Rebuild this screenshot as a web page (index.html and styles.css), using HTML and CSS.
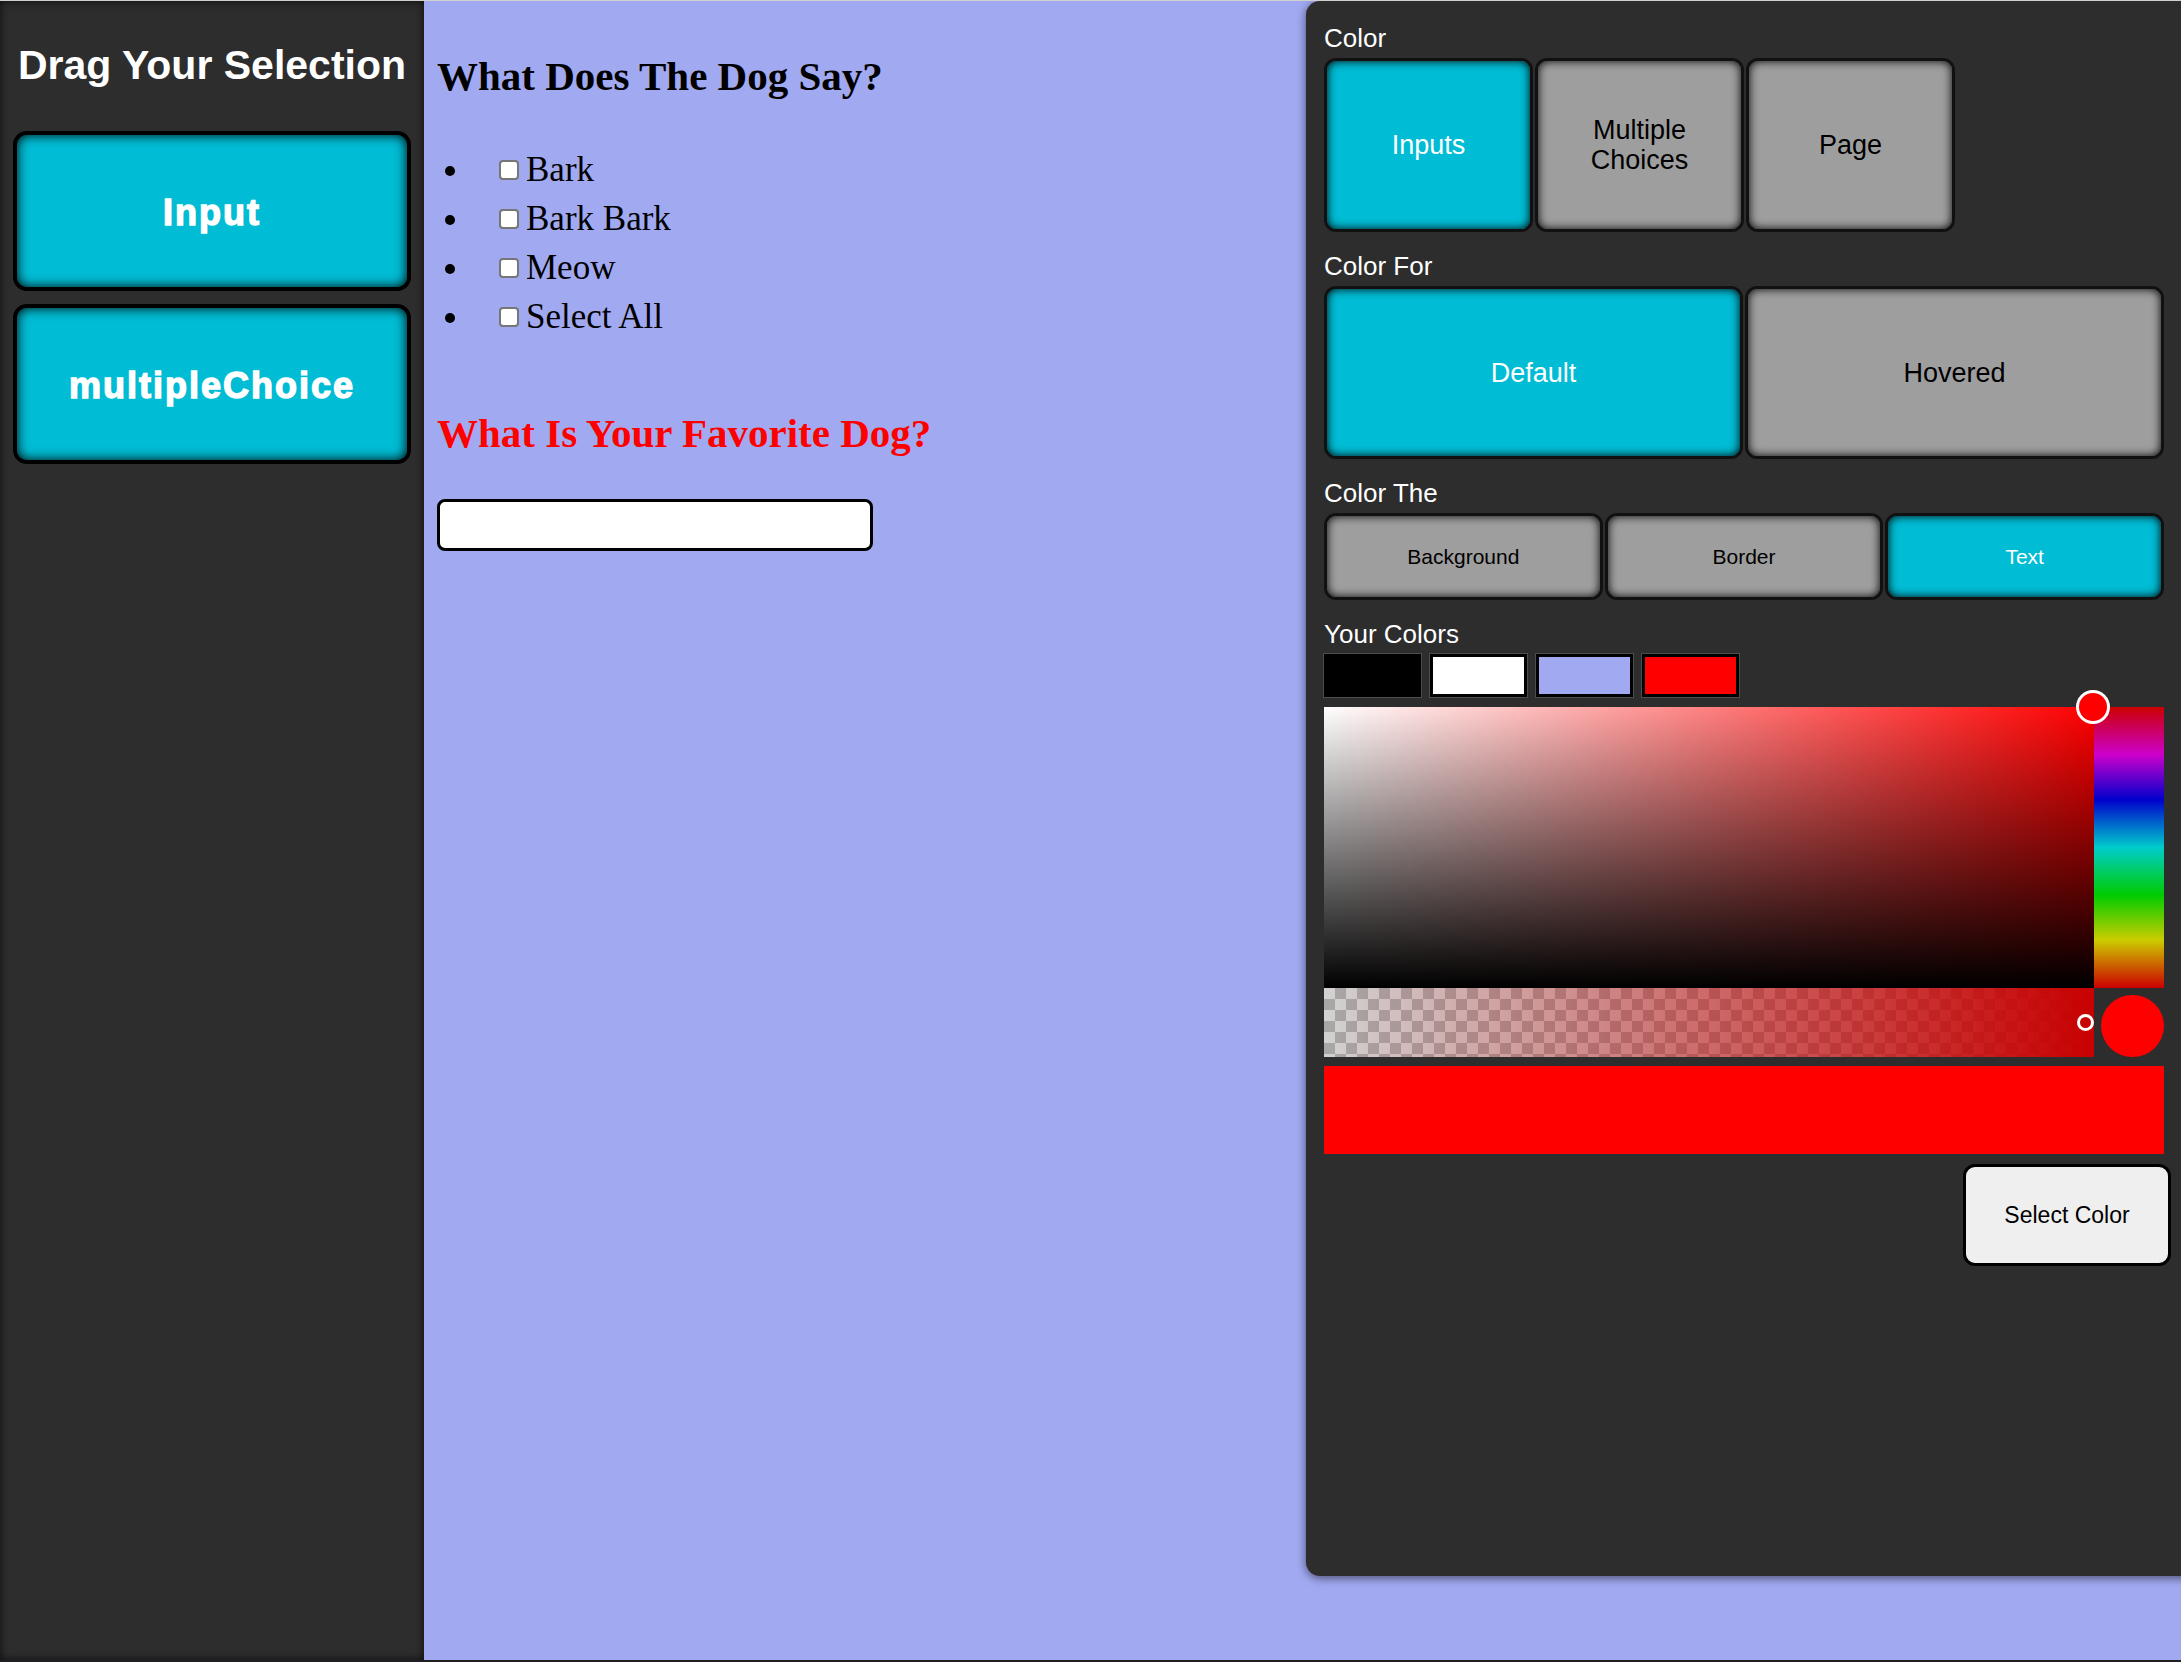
FILE: index.html
```html
<!DOCTYPE html>
<html>
<head>
<meta charset="utf-8">
<title>Form Builder</title>
<link rel="stylesheet" href="styles.css">
</head>
<body>
<div class="app">
  <aside class="sidebar">
    <h1 class="side-title">Drag Your Selection</h1>
    <div class="drag-btn">Input</div>
    <div class="drag-btn">multipleChoice</div>
  </aside>

  <main class="canvas">
    <h2 class="q-title">What Does The Dog Say?</h2>
    <ul class="choices">
      <li><input type="checkbox">Bark</li>
      <li><input type="checkbox">Bark Bark</li>
      <li><input type="checkbox">Meow</li>
      <li><input type="checkbox">Select All</li>
    </ul>
    <h2 class="q-title red">What Is Your Favorite Dog?</h2>
    <input class="text-input" type="text">
  </main>

  <section class="panel">
    <div class="panel-inner">
      <div class="label">Color</div>
      <div class="row row-a">
        <div class="opt on">Inputs</div>
        <div class="opt">Multiple<br>Choices</div>
        <div class="opt">Page</div>
      </div>

      <div class="label">Color For</div>
      <div class="row row-b">
        <div class="opt on">Default</div>
        <div class="opt">Hovered</div>
      </div>

      <div class="label">Color The</div>
      <div class="row row-c">
        <div class="opt">Background</div>
        <div class="opt">Border</div>
        <div class="opt on">Text</div>
      </div>

      <div class="label">Your Colors</div>
      <div class="swatches">
        <div class="swatch sw-black"></div>
        <div class="swatch sw-white"></div>
        <div class="swatch sw-lav"></div>
        <div class="swatch sw-red"></div>
      </div>

      <div class="picker">
        <div class="pick-top">
          <div class="sat"></div>
          <div class="hue"></div>
        </div>
        <div class="pick-alpha">
          <div class="alpha"></div>
          <div class="preview"></div>
        </div>
        <div class="sat-thumb"></div>
        <div class="alpha-thumb"></div>
      </div>

      <div class="result"></div>

      <div class="actions">
        <button class="select-btn">Select Color</button>
      </div>
    </div>
  </section>
</div>
</body>
</html>
```

FILE: styles.css
```css
html, body {
  margin: 0;
  padding: 0;
  overflow: hidden;
}

body {
  background: #1f1f25;
  border-top: 1px solid #d0d0d0;
}

.app {
  position: relative;
  display: flex;
  height: 1659px;
  background: #a1a9f1;
}

/* ---------- sidebar ---------- */
.sidebar {
  width: 424px;
  flex: none;
  box-sizing: border-box;
  background: #2d2d2d;
  box-shadow: inset 0 0 8px rgba(0, 0, 0, 0.75);
  padding: 41px 13px 0;
  display: flex;
  flex-direction: column;
  gap: 13px;
}

.side-title {
  margin: 0 0 29px;
  font: bold 41px/47px "Liberation Sans", Arial, sans-serif;
  color: #fff;
  text-align: center;
  white-space: nowrap;
}

.drag-btn {
  height: 160px;
  box-sizing: border-box;
  background: #00bcd4;
  border: 4px solid #000;
  border-radius: 14px;
  box-shadow: inset 0 0 12px #000;
  display: flex;
  align-items: center;
  justify-content: center;
  padding-top: 3px;
  color: #fff;
  font: bold 36px "Liberation Sans", Arial, sans-serif;
  letter-spacing: 2px;
  -webkit-text-stroke: 1.4px #fff;
}

/* ---------- canvas ---------- */
.canvas {
  flex: 1;
  padding: 0 13px;
  font-family: "Liberation Serif", "Times New Roman", serif;
  color: #000;
}

.q-title {
  margin: 52px 0 0;
  font: bold 41px/47px "Liberation Serif", "Times New Roman", serif;
}

.q-title.red {
  margin-top: 69px;
  color: #f00;
}

.choices {
  margin: 45px 0 0;
  padding-left: 35px;
  list-style: disc;
  font: 35px/49px "Liberation Serif", "Times New Roman", serif;
}

.choices li {
  padding-left: 23px;
}

.choices input {
  -webkit-appearance: none;
  appearance: none;
  box-sizing: border-box;
  width: 20px;
  height: 20px;
  margin: 0 7px 1px 4px;
  background: #fff;
  border: 2px solid #767676;
  border-radius: 4px;
  vertical-align: baseline;
}

.text-input {
  display: block;
  margin-top: 42px;
  width: 436px;
  height: 52px;
  box-sizing: border-box;
  border: 3px solid #000;
  border-radius: 8px;
  background: #fff;
}

/* ---------- colour panel ---------- */
.panel {
  position: absolute;
  top: 0;
  left: 1306px;
  width: 900px;
  height: 1575px;
  box-sizing: border-box;
  padding: 22px 0 0 18px;
  background: #2d2d2d;
  border-radius: 14px;
  box-shadow: 0 2px 10px rgba(0, 0, 0, 0.55);
  font-family: "Liberation Sans", Arial, sans-serif;
}

.panel-inner {
  width: 840px;
}

.label {
  margin: 0 0 5px;
  font-size: 26px;
  line-height: 30px;
  color: #fff;
}

.row {
  display: flex;
  gap: 2px;
  margin-bottom: 19px;
}

.opt {
  box-sizing: border-box;
  display: flex;
  align-items: center;
  justify-content: center;
  text-align: center;
  background: #9e9e9e;
  color: #000;
  border: 3px solid #111;
  border-radius: 12px;
  box-shadow: inset 0 0 10px #000;
  font-size: 27px;
  line-height: 30px;
}

.opt.on {
  background: #00bcd4;
  color: #fff;
}

.row-a .opt {
  width: 209px;
  height: 174px;
}

.row-b .opt {
  flex: 1;
  height: 173px;
}

.row-c .opt {
  flex: 1;
  height: 87px;
  font-size: 21px;
}

.swatches {
  display: flex;
  gap: 9px;
  margin-bottom: 10px;
}

.swatch {
  width: 97px;
  height: 43px;
  box-sizing: border-box;
  border: 3px solid #000;
  box-shadow: 0 0 0 1px #4d4d4d;
}

.sw-black { background: #000; }
.sw-white { background: #fff; }
.sw-lav { background: #a1a9f1; }
.sw-red { background: #f00; }

.picker {
  position: relative;
}

.pick-top {
  display: flex;
  height: 281px;
}

.sat {
  width: 770px;
  background:
    linear-gradient(to top, #000, rgba(0, 0, 0, 0)),
    linear-gradient(to right, #fff, #f00);
}

.hue {
  flex: 1;
  background: linear-gradient(to bottom,
    #cc0000 0%, #cc00cc 17%, #0000cc 33%, #00cccc 50%,
    #00cc00 67%, #cccc00 83%, #cc0000 100%);
}

.pick-alpha {
  display: flex;
  align-items: flex-end;
  height: 69px;
}

.alpha {
  width: 770px;
  height: 69px;
  background:
    linear-gradient(to right, rgba(200, 0, 0, 0), rgb(200, 0, 0)),
    repeating-conic-gradient(#a8a8a8 0 25%, #d2d2d2 0 50%) 0 0 / 22px 22px;
}

.preview {
  width: 63px;
  height: 62px;
  margin-left: 7px;
  border-radius: 50%;
  background: #f00;
}

.sat-thumb {
  position: absolute;
  left: 752px;
  top: -17px;
  width: 34px;
  height: 34px;
  box-sizing: border-box;
  border: 3px solid #fff;
  border-radius: 50%;
  background: #f00;
}

.alpha-thumb {
  position: absolute;
  left: 753px;
  top: 307px;
  width: 17px;
  height: 17px;
  box-sizing: border-box;
  border: 3px solid #fff;
  border-radius: 50%;
}

.result {
  height: 88px;
  margin-top: 9px;
  background: #f00;
}

.actions {
  display: flex;
  justify-content: flex-end;
  margin: 10px -7px 0 0;
}

.select-btn {
  width: 208px;
  height: 102px;
  box-sizing: border-box;
  background: #efefef;
  border: 3px solid #000;
  border-radius: 12px;
  font: 23px "Liberation Sans", Arial, sans-serif;
  color: #000;
}
```
